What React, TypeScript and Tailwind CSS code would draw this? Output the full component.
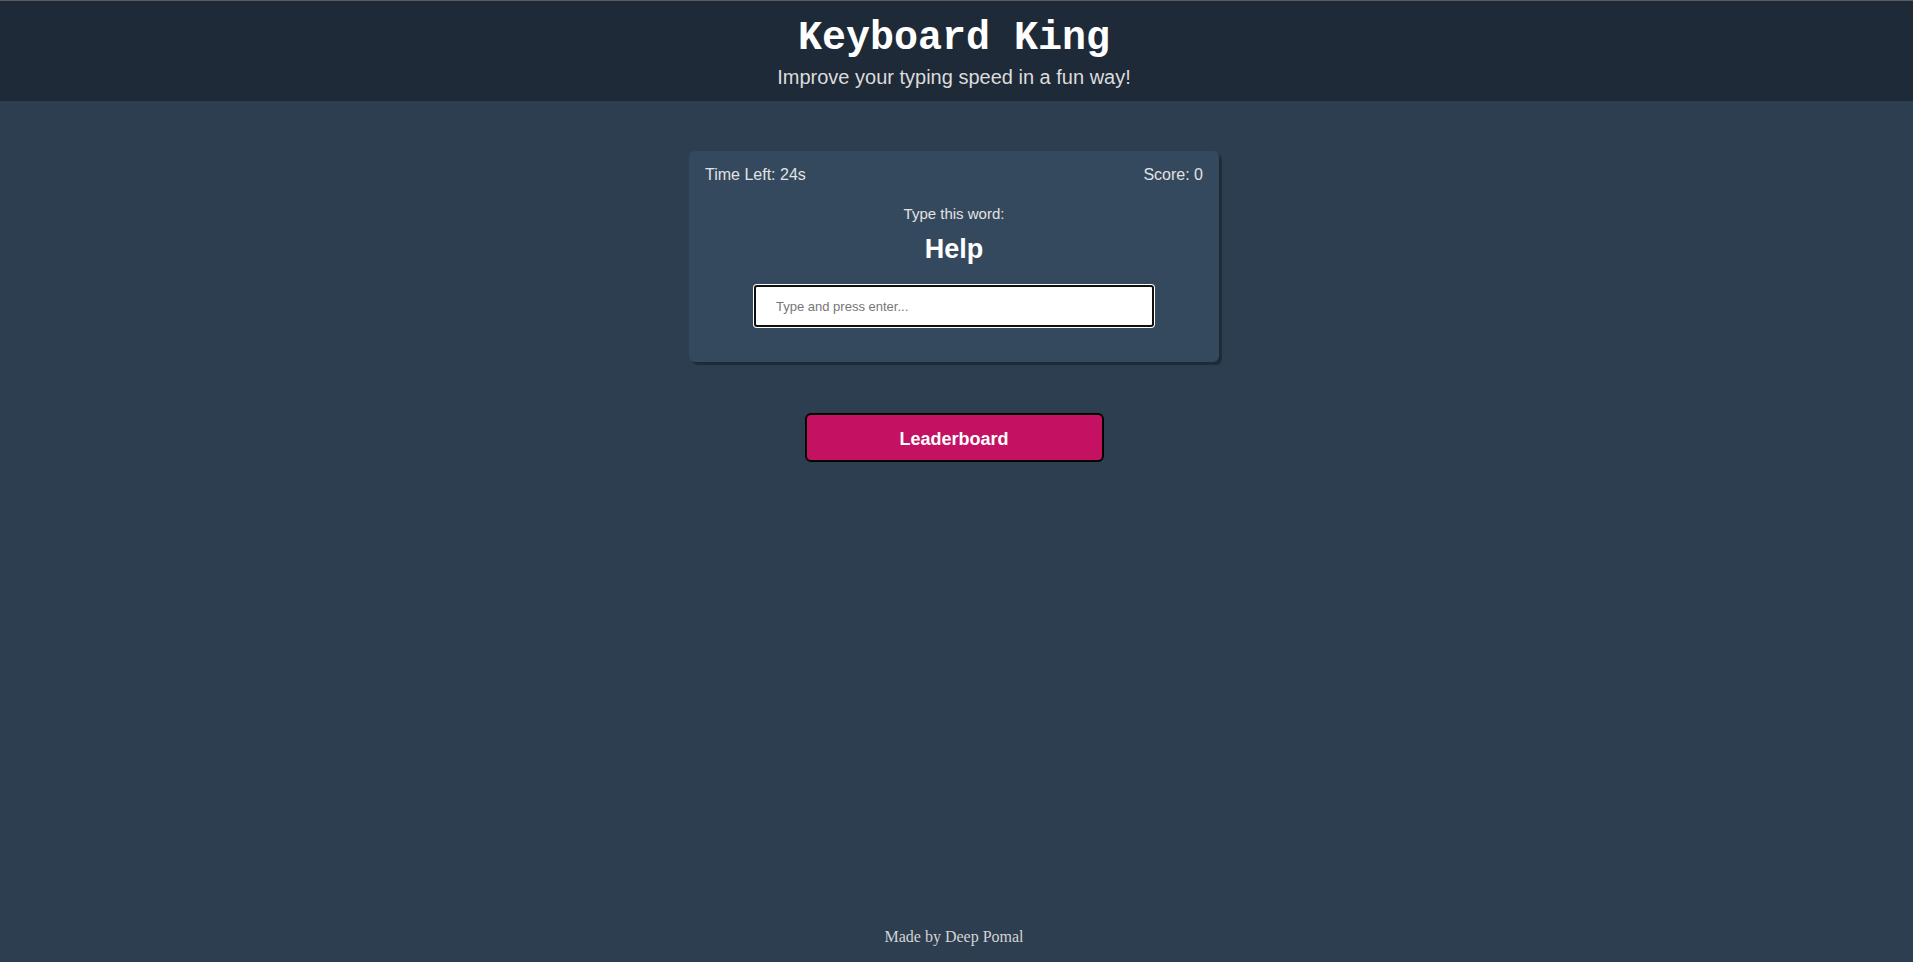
import React from "react";

export default function App() {
  return (
    <div className="min-h-screen flex flex-col bg-[#2c3e50] font-['Liberation_Sans',Arial,sans-serif] pr-[5px]">
      <header className="-mr-[5px] pr-[5px] bg-[#1f2a38] border-t border-[#5c5c5c] pt-[14px] pb-[12px] text-center">
        <h1 className="m-0 text-[40px] leading-[48px] font-bold text-white font-['Liberation_Mono','Courier_New',monospace]">
          Keyboard King
        </h1>
        <p className="mt-[3px] text-[20px] leading-[23px] text-[#dcdcdc]">
          Improve your typing speed in a fun way!
        </p>
      </header>

      <main className="flex-1 flex flex-col items-center">
        <div className="mt-[50px] w-[530px] rounded-[6px] bg-[#34495e] px-4 pt-[15px] pb-[35px] shadow-[3px_3px_1px_rgba(0,0,0,0.3)]">
          <div className="flex justify-between text-[16px] leading-[18px] text-[#e2e2e2]">
            <span>Time Left: 24s</span>
            <span>Score: 0</span>
          </div>
          <div className="mt-[21px] text-center text-[15px] leading-[17px] text-[#e2e2e2]">
            Type this word:
          </div>
          <div className="mt-[12px] text-center text-[27px] leading-[31px] font-bold text-white">
            Help
          </div>
          <div className="mt-[20px] flex justify-center">
            <input
              autoFocus
              type="text"
              placeholder="Type and press enter..."
              className="w-[400px] h-[42px] rounded-[3px] border-2 border-[#101010] bg-white pl-[20px] text-[13px] text-black caret-black outline-none ring-1 ring-white placeholder:text-[#767676]"
            />
          </div>
        </div>

        <button className="mt-[51px] w-[299px] h-[49px] rounded-[6px] border-2 border-black bg-[#c51162] pt-[3px] text-[18px] font-bold text-white">
          Leaderboard
        </button>
      </main>

      <footer className="pb-[16px] text-center text-[16px] leading-[18px] text-[#d4d4d4] font-['Liberation_Serif','Times_New_Roman',serif]">
        Made by Deep Pomal
      </footer>
    </div>
  );
}
